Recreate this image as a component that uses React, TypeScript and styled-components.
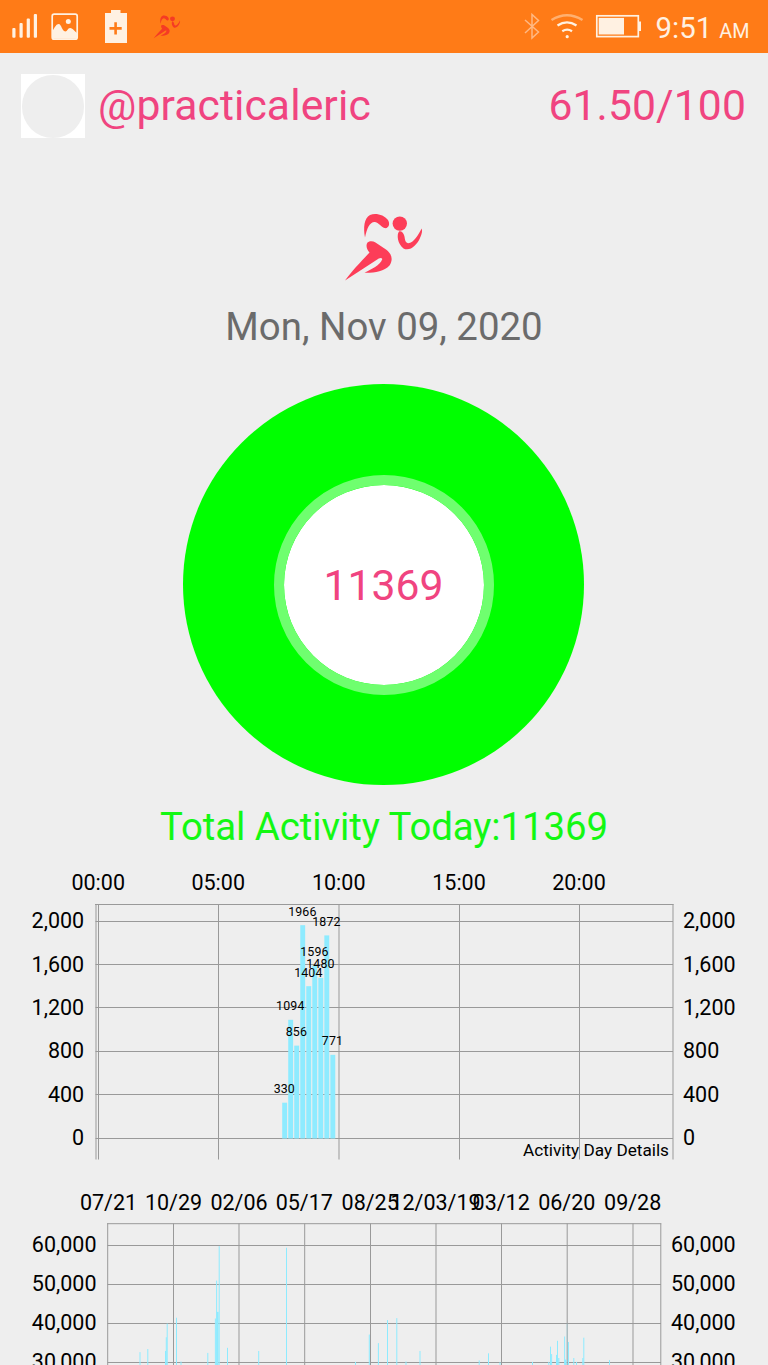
import React from "react";
import styled, { createGlobalStyle } from "styled-components";

const GlobalStyle = createGlobalStyle`
  html, body { margin: 0; padding: 0; background: #eeeeee; overflow: hidden; }
  * { box-sizing: border-box; }
`;

const Screen = styled.main`
  width: 768px;
  height: 1365px;
  overflow: hidden;
  display: flex;
  flex-direction: column;
  background: #eeeeee;
  font-family: Roboto, "Liberation Sans", sans-serif;
`;

const StatusBar = styled.header`
  flex: none;
  height: 53px;
  display: flex;
  justify-content: space-between;
  background: #ff7b17;
  color: #fff1e2;
`;

const StatusIcons = styled.svg`
  flex: none;
  display: block;
  height: 53px;
`;

const StatusRight = styled.div`
  display: flex;
  padding-right: 17px;
`;

const Clock = styled.div`
  width: 96px;
  padding-left: 0.6px;
  font-size: 29.4px;
  line-height: 56px;
  white-space: nowrap;
`;

const Meridiem = styled.span`
  font-size: 19.8px;
  margin-left: 7px;
`;

const Profile = styled.section`
  flex: none;
  height: 107px;
  display: flex;
  align-items: flex-start;
  padding: 21.4px 22px 0 21px;
  color: #f04480;
`;

const Avatar = styled.div`
  width: 64px;
  height: 64px;
  padding: 0.8px;
  background: #ffffff;
  &::before {
    content: "";
    display: block;
    width: 62.4px;
    height: 62.4px;
    border-radius: 50%;
    background: #eeeeee;
  }
`;

const Handle = styled.div`
  flex: 1;
  margin: 5.6px 0 0 13px;
  font-size: 42.67px;
  line-height: 50px;
  letter-spacing: 0.1px;
`;

const Score = styled.div`
  margin-top: 5.6px;
  font-size: 42.67px;
  line-height: 50px;
  letter-spacing: 0.1px;
`;

const Summary = styled.section`
  flex: none;
  display: flex;
  flex-direction: column;
  align-items: center;
  padding-top: 50px;
`;

const RunnerLogo = styled.svg`
  display: block;
  width: 86px;
  height: 74px;
`;

const DateText = styled.div`
  margin-top: 18px;
  height: 50px;
  line-height: 50px;
  font-size: 38.4px;
  color: #6b6b6b;
`;

const Dial = styled.div`
  margin: 32px 1px 0 0;
  width: 401px;
  height: 401px;
  border-radius: 50%;
  background: #00ff00;
  display: flex;
  align-items: center;
  justify-content: center;
`;

const DialCenter = styled.div`
  width: 220px;
  height: 220px;
  border-radius: 50%;
  border: 10px solid #6fff6f;
  background: #ffffff;
  display: flex;
  align-items: center;
  justify-content: center;
  color: #f04480;
  font-size: 42.67px;
  background-clip: padding-box;
`;

const Total = styled.div`
  margin-top: 17px;
  height: 50px;
  line-height: 50px;
  font-size: 38.4px;
  letter-spacing: -0.08px;
  color: #13f813;
`;

const Charts = styled.section`
  flex: none;
  display: flex;
  flex-direction: column;
  padding-top: 10px;
`;

const Chart = styled.svg`
  flex: none;
  display: block;
  width: 768px;
  overflow: hidden;
`;

const GridLine = styled.path`
  fill: none;
  stroke: #999999;
  stroke-width: 1;
`;

const AxisLabel = styled.text`
  font-size: 21.5px;
  fill: #000000;
`;

const BarValue = styled.text`
  font-size: 12.4px;
  letter-spacing: 0.15px;
  text-anchor: middle;
  fill: #000000;
`;

const Caption = styled.text`
  font-size: 17.2px;
  text-anchor: end;
  fill: #000000;
`;

const Bar = styled.rect`
  fill: #8eebff;
`;

function RunnerShape({ color }: { color: string }) {
  return (
    <g fill={color}>
      <circle cx="69.8" cy="23.6" r="7.2" />
      <path d="M35 37.5 C33.2 28 34 18 40 15 C46 12.5 54 15 58 20 C60.5 24 58.5 29 54.5 28 C51 27 49.5 23.2 45 22 C40 21.5 37 28 35 37.5 Z" />
      <path d="M69 31.5 C66.5 34.5 67.5 44 73.5 48.5 C80 51.8 87 45 90 38 C92 33.5 92.5 31 91.7 28.5 C88.5 34.5 83.5 43.5 78 43.2 C73.5 42 76 36 72.5 32.5 C71.5 31.3 70 31 69 31.5 Z" />
      <path d="M37.5 42.5 C40 40.5 43 41 45.5 42.5 L56 49.5 C62.5 54.5 63 60 59.5 65.5 C54 71.5 44.5 73 34.5 72.8 C41 69 50.5 65.5 52.3 59 C51.5 57 49 58 46.5 60 L15 80.5 C21 72 31.5 61 39.5 52.5 C36.8 49.5 35.5 45.5 37.5 42.5 Z" />
    </g>
  );
}

const hours: [number, string][] = [
  [98.2, "00:00"],
  [218.2, "05:00"],
  [338.7, "10:00"],
  [459, "15:00"],
  [579, "20:00"],
];
const dayLevels = [2000, 1600, 1200, 800, 400, 0];
const dayValues = [330, 1094, 856, 1966, 1404, 1596, 1480, 1872, 771];
const DAY_BASE = 276.5;
const dayY = (v: number) => DAY_BASE - v * 0.1085;

function DayChart() {
  return (
    <Chart height="318" viewBox="0 0 768 318">
      {hours.map(([x, label]) => (
        <AxisLabel key={label} x={x} y="28.4" textAnchor="middle">{label}</AxisLabel>
      ))}
      {dayLevels.map((v) => (
        <React.Fragment key={v}>
          <GridLine d={`M95.5 ${Math.round(dayY(v)) - 0.5}H673`} />
          <AxisLabel x="84.2" y={dayY(v) + 6.6} textAnchor="end">{v.toLocaleString("en-US")}</AxisLabel>
          <AxisLabel x="683" y={dayY(v) + 6.6}>{v.toLocaleString("en-US")}</AxisLabel>
        </React.Fragment>
      ))}
      <GridLine d="M95 42.5H673.5M96 42V297.5M98.5 42V297.5M218.5 42V297.5M339 42V297.5M459.5 42V297.5M579.5 42V297.5M673 42V297.5" />
      {dayValues.map((v, i) => (
        <Bar key={v} x={282.2 + i * 6.02} y={dayY(v)} width="4.9" height={DAY_BASE - dayY(v)} />
      ))}
      {dayValues.map((v, i) => (
        <BarValue key={v} x={284.3 + i * 6.02} y={dayY(v) - 9.5}>{v}</BarValue>
      ))}
      <Caption x="669" y="294">Activity Day Details</Caption>
    </Chart>
  );
}

const dates: [number, string][] = [
  [108.5, "07/21"],
  [173.5, "10/29"],
  [239, "02/06"],
  [304.3, "05/17"],
  [370.2, "08/25"],
  [435.5, "12/03/19"],
  [501.2, "03/12"],
  [566.8, "06/20"],
  [632.7, "09/28"],
];
const historyLevels = [60000, 50000, 40000, 30000];
const historyY = (v: number) => 65.4 + (60000 - v) * 0.00391;

/* x position, activity count, bar width */
const history: [number, number, number][] = [
  [140, 32700, 1], [147.8, 33500, 1], [165.5, 33000, 1], [166.3, 36500, 1], [167.2, 40000, 1],
  [176.5, 41500, 1], [181, 30300, 1], [207.8, 32500, 1], [215.4, 41300, 1], [216.6, 51000, 1],
  [217.6, 43000, 2], [219.2, 59800, 1], [227.5, 33800, 1], [258.7, 33000, 1], [286.5, 59400, 1],
  [355.5, 30200, 1], [369.3, 37200, 1], [378.4, 35000, 1], [387.5, 40900, 1], [396.8, 41400, 1],
  [406, 30300, 1], [420, 33000, 1], [479.2, 30600, 1], [488.5, 32400, 1], [500, 30100, 1],
  [532.5, 30200, 1], [548.8, 30200, 1], [550.5, 34100, 1], [551.6, 32200, 1], [556.5, 32000, 1],
  [557.5, 35600, 1], [558.8, 31200, 1.2], [564.6, 36700, 1], [565.8, 30800, 1.6], [567, 40000, 0.3],
  [568.5, 35300, 1], [573.8, 31200, 1], [576.5, 30200, 1], [582.8, 31200, 1], [583.8, 36400, 1],
  [609.5, 30700, 1],
];

function HistoryChart() {
  return (
    <Chart height="185" viewBox="0 0 768 185">
      {dates.map(([x, label]) => (
        <AxisLabel key={label} x={x} y="30.2" textAnchor="middle">{label}</AxisLabel>
      ))}
      {historyLevels.map((v) => (
        <React.Fragment key={v}>
          <GridLine d={`M107.5 ${Math.floor(historyY(v)) + 0.5}H661`} />
          <AxisLabel x="96.5" y={historyY(v) + 6.4} textAnchor="end">{v.toLocaleString("en-US")}</AxisLabel>
          <AxisLabel x="671" y={historyY(v) + 6.4}>{v.toLocaleString("en-US")}</AxisLabel>
        </React.Fragment>
      ))}
      <GridLine d="M107 43.7H661.3M107.7 43.5V185M173.5 43.5V185M239 43.5V185M304.7 43.5V185M370.5 43.5V185M436 43.5V185M501.5 43.5V185M567.2 43.5V185M633 43.5V185M660.8 43.5V185" />
      {history.map(([x, v, w]) => (
        <Bar key={x} x={x - w / 2} y={historyY(v)} width={w} height={185 - historyY(v)} />
      ))}
    </Chart>
  );
}

export default function App() {
  return (
    <Screen>
      <GlobalStyle />
      <StatusBar>
        <StatusIcons width="200" viewBox="0 0 200 53">
          <g fill="#fff1e2">
            <rect x="12.3" y="28" width="3.2" height="9.7" rx="1" />
            <rect x="19.5" y="23" width="3.2" height="14.7" rx="1" />
            <rect x="26.7" y="18.5" width="3.2" height="19.2" rx="1" />
            <rect x="33.8" y="14" width="3.2" height="23.7" rx="1" />
            <path d="M111 10H120.5V13H127V43H105V13H111Z" />
            <circle cx="68.3" cy="21.5" r="2.5" />
            <path d="M53 30C55 27 56.3 24 58.7 24C61.5 24 62 31.4 65.3 31.4C67.5 31.4 67.8 27.8 70.2 28C73 28.2 74.5 31.5 77 33V38.8H53Z" />
          </g>
          <rect x="52.2" y="14.2" width="25" height="25" rx="2" fill="none" stroke="#fff1e2" strokeWidth="1.7" />
          <path d="M109.5 28.4H121.7M115.6 22.2V34.4" stroke="#ff7b17" strokeWidth="2.6" />
          <g transform="translate(148.6 10.8) scale(.342)"><RunnerShape color="#f53b24" /></g>
        </StatusIcons>
        <StatusRight>
          <StatusIcons width="133" viewBox="522 0 133 53">
            <path d="M525 20L538.5 32L532 38V14.5L538.5 20.5L525 33" fill="none" stroke="#ffb883" strokeWidth="1.5" />
            <path d="M551.5 20Q567 10.5 582.5 20" fill="none" stroke="#ffb070" strokeWidth="2.4" />
            <path d="M557.5 25.5Q567 19.3 576.5 25.5M562.3 31.2Q567.2 28 572 31.2" fill="none" stroke="#fff1e2" strokeWidth="2.3" />
            <circle cx="567.2" cy="36.7" r="1.6" fill="#fff1e2" />
            <rect x="596.8" y="15.8" width="41.5" height="20.8" fill="none" stroke="#fff1e2" strokeWidth="1.7" />
            <rect x="598.7" y="17.9" width="25.3" height="16.6" fill="#fff1e2" />
            <rect x="638.5" y="21.5" width="2.5" height="9.5" fill="#fff1e2" />
          </StatusIcons>
          <Clock>9:51<Meridiem>AM</Meridiem></Clock>
        </StatusRight>
      </StatusBar>
      <Profile>
        <Avatar />
        <Handle>@practicaleric</Handle>
        <Score>61.50/100</Score>
      </Profile>
      <Summary>
        <RunnerLogo viewBox="11 10 86 74"><RunnerShape color="#fd3d58" /></RunnerLogo>
        <DateText>Mon, Nov 09, 2020</DateText>
        <Dial>
          <DialCenter>11369</DialCenter>
        </Dial>
        <Total>Total Activity Today:11369</Total>
      </Summary>
      <Charts>
        <DayChart />
        <HistoryChart />
      </Charts>
    </Screen>
  );
}
